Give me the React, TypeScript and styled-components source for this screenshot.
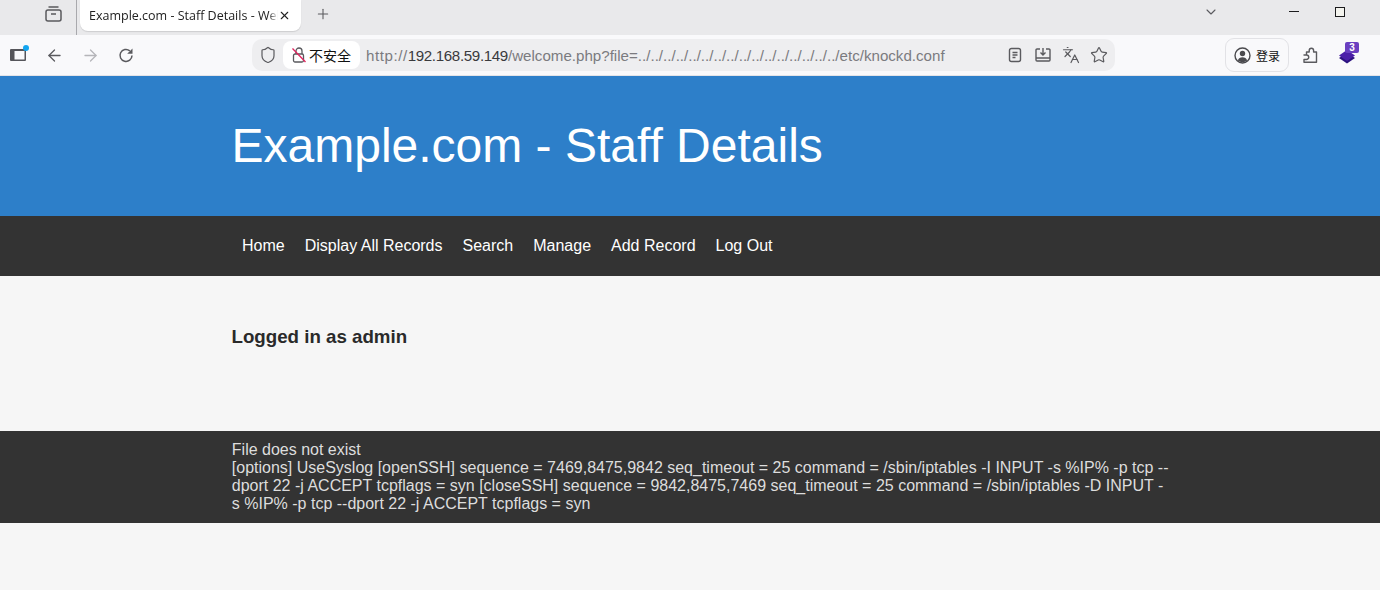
import styled, { createGlobalStyle } from "styled-components";
import { ArrowLeft, ArrowRight, Shield, Star, ChevronDown, Plus, X, Languages } from "lucide-react";

const Global = createGlobalStyle`
  html, body { margin: 0; padding: 0; background: #f6f6f6; overflow: hidden; }
  body { font-family: "Liberation Sans", Arial, sans-serif; }
`;

const Page = styled.div`
  width: 1380px;
  height: 590px;
  overflow: hidden;
  background: #f6f6f6;
`;

const TabStrip = styled.div`
  height: 35px;
  background: #e9e9eb;
  display: flex;
  align-items: flex-start;
  color: #5a5a5e;
`;

const TabGroup = styled.div`
  width: 77px;
  height: 35px;
  border-right: 1px solid #a9a9ad;
  box-sizing: border-box;
  display: flex;
  align-items: center;
  justify-content: flex-start;
  padding-left: 45px;
  padding-bottom: 8px;
`;

const Tab = styled.div`
  width: 221px;
  height: 31px;
  margin-left: 3px;
  background: #fff;
  border-radius: 0 0 8px 8px;
  display: flex;
  align-items: center;
  padding: 0 10px 0 9px;
  box-sizing: border-box;
  font: 12.5px "Open Sans", sans-serif;
  color: #222;
  box-shadow: 0 1px 1px rgba(0, 0, 0, 0.12);
`;

const TabTitle = styled.span`
  flex: 1;
  overflow: hidden;
  white-space: nowrap;
  -webkit-mask-image: linear-gradient(to right, #000 95%, transparent);
  mask-image: linear-gradient(to right, #000 95%, transparent);
`;

const NewTab = styled.div`
  margin-left: 14px;
  margin-top: 6px;
  display: flex;
`;

const Spring = styled.div`
  flex: 1;
`;

const WindowButtons = styled.div`
  display: flex;
  align-items: center;
  height: 24px;
  width: 177px;
`;

const MinimizeBar = styled.div`
  width: 10px;
  height: 1px;
  background: #1c1c1e;
  margin-left: 70px;
  margin-bottom: 2px;
`;

const Square = styled.div`
  width: 8px;
  height: 8px;
  border: 1px solid #1c1c1e;
  background: #f4f4ee;
  margin-left: 36px;
`;

const Toolbar = styled.div`
  height: 40px;
  background: #f9f9fb;
  display: flex;
  align-items: center;
  color: #5a5a5e;
  border-bottom: 1px solid #e4e4e8;
  box-sizing: content-box;
`;

const NavIcons = styled.div`
  display: flex;
  align-items: center;
  width: 252px;
  flex: none;
  padding-left: 10px;
  box-sizing: border-box;
  gap: 17px;
`;

const SideIcon = styled.div`
  position: relative;
  width: 16px;
  height: 18px;
  display: flex;
  align-items: center;
`;

const Dot = styled.span`
  position: absolute;
  top: -1px;
  right: -3px;
  width: 6px;
  height: 6px;
  border-radius: 50%;
  background: #12a5f0;
`;

const BackIcon = styled(ArrowLeft)`
  margin-left: 1.5px;
`;

const ReloadIcon = styled.svg`
  margin-left: 1.5px;
`;

const Omnibox = styled.div`
  width: 863px;
  height: 32px;
  background: #eeeef0;
  border-radius: 10px;
  display: flex;
  align-items: center;
  padding: 0 2px 0 7px;
  box-sizing: border-box;
  flex: none;
`;

const Insecure = styled.div`
  margin-left: 6px;
  height: 28px;
  width: 77px;
  background: #fff;
  border-radius: 8px;
  display: flex;
  align-items: center;
  gap: 3px;
  padding-left: 9px;
  box-sizing: border-box;
  font: 14px "Noto Sans CJK SC", sans-serif;
  color: #111;
`;

const Url = styled.div`
  flex: 1;
  margin-left: 6px;
  font: 15.13px "Liberation Sans", sans-serif;
  color: #7b7b7f;
  white-space: nowrap;
  overflow: hidden;
`;

const Scheme = styled.span`
  letter-spacing: 0.55px;
`;

const Host = styled.span`
  color: #3a3a3d;
  letter-spacing: -0.35px;
`;

const UrlIcons = styled.div`
  display: grid;
  grid-template-columns: repeat(4, 28px);
  justify-items: center;
  align-items: center;
`;

const Login = styled.div`
  margin-left: 110px;
  width: 64px;
  height: 34px;
  border: 1px solid #e2e2e6;
  border-radius: 9px;
  display: flex;
  align-items: center;
  gap: 5px;
  padding-left: 8px;
  box-sizing: border-box;
  font: 12px "Noto Sans CJK SC", sans-serif;
  color: #111;
  flex: none;
`;

const ExtIcons = styled.div`
  display: flex;
  align-items: center;
  margin-left: 14px;
  gap: 21px;
`;

const Badge = styled.span`
  position: absolute;
  top: -4px;
  right: -4px;
  width: 14px;
  height: 11px;
  background: #6a3fc0;
  border-radius: 2px;
  color: #fff;
  font: bold 10px/11px "Liberation Sans", sans-serif;
  text-align: center;
`;

const Gem = styled.div`
  position: relative;
  width: 16px;
  height: 18px;
  display: flex;
  align-items: flex-end;
`;

const Banner = styled.header`
  height: 140px;
  background: #2d7fc9;
  display: flex;
  align-items: center;
  padding: 0 0 2px 231.5px;
  box-sizing: border-box;
`;

const Title = styled.h1`
  margin: 0;
  font: 400 48px "Liberation Sans", Arial, sans-serif;
  color: #fff;
`;

const Nav = styled.nav`
  height: 60px;
  background: #333;
  display: flex;
  align-items: center;
  padding-left: 232px;
`;

const NavLink = styled.a`
  padding: 0 10px;
  font-size: 16px;
  color: #fff;
  text-decoration: none;
`;

const Main = styled.main`
  height: 155px;
  box-sizing: border-box;
  padding: 50px 0 0 231.5px;
`;

const Logged = styled.h3`
  margin: 0;
  font: bold 18.72px "Liberation Sans", Arial, sans-serif;
  color: #2a2a2a;
`;

const Output = styled.footer`
  background: #333;
  color: #ddd;
  font-size: 16px;
  line-height: 18px;
  height: 92px;
  box-sizing: border-box;
  padding: 10px 210px 0 231.8px;
`;

const iconStroke = { strokeWidth: 1.6 };

export default function App() {
  return (
    <Page>
      <Global />
      <TabStrip>
        <TabGroup>
          <svg width="17" height="17" viewBox="0 0 17 17" fill="none" stroke="#5a5a5e" strokeWidth="1.5">
            <rect x="1" y="5" width="15" height="11" rx="2" />
            <path d="M3.5 2h10M6 9h5" />
          </svg>
        </TabGroup>
        <Tab>
          <TabTitle>Example.com - Staff Details - Welcome</TabTitle>
          <X size={13} color="#222" strokeWidth={2} />
        </Tab>
        <NewTab>
          <Plus size={16} {...iconStroke} />
        </NewTab>
        <Spring />
        <WindowButtons>
          <ChevronDown size={16} {...iconStroke} />
          <MinimizeBar />
          <Square />
        </WindowButtons>
      </TabStrip>
      <Toolbar>
        <NavIcons>
          <SideIcon>
            <svg width="16" height="12" viewBox="0 0 16 12">
              <path d="M1 0h14a1 1 0 0 1 1 1v10a1 1 0 0 1-1 1H1a1 1 0 0 1-1-1V1a1 1 0 0 1 1-1Zm3.500 2v8.500h10V2Z" fill="#55555a" fillRule="evenodd" />
            </svg>
            <Dot />
          </SideIcon>
          <BackIcon size={19} {...iconStroke} />
          <ArrowRight size={19} color="#b5b5b9" {...iconStroke} />
          <ReloadIcon width="16" height="16" viewBox="0 0 16 16" fill="none">
            <path d="M14 8.500a6 6 0 1 1-2.200-4.700" stroke="#5a5a5e" strokeWidth="1.5" />
            <path d="M14.500 1.500v5.300H9.200Z" fill="#5a5a5e" />
          </ReloadIcon>
        </NavIcons>
        <Omnibox>
          <Shield size={18} {...iconStroke} />
          <Insecure>
            <svg width="14" height="16" viewBox="0 0 14 16" fill="none" stroke="#5a5a5e" strokeWidth="1.3">
              <rect x="1.5" y="7" width="10" height="8" rx="1.5" />
              <path d="M4 7V4a3 3 0 0 1 6 0v3" />
              <path d="M0.5 1.500 13.5 15" stroke="#e0245e" />
            </svg>
            不安全
          </Insecure>
          <Url>
            <Scheme>http://</Scheme>
            <Host>192.168.59.149</Host>/welcome.php?file=../../../../../../../../../../../../../../../../etc/knockd.conf
          </Url>
          <UrlIcons>
            <svg width="16" height="16" viewBox="0 0 16 16" fill="none" stroke="#5a5a5e" strokeWidth="1.4">
              <rect x="2.5" y="1.500" width="11" height="13" rx="2" />
              <path d="M5.500 5.500h5M5.500 8h5M5.500 10.500h3" />
            </svg>
            <svg width="16" height="16" viewBox="0 0 16 16" fill="none" stroke="#5a5a5e" strokeWidth="1.4">
              <path d="M5 2H2a1 1 0 0 0-1 1v10a1 1 0 0 0 1 1h12a1 1 0 0 0 1-1V3a1 1 0 0 0-1-1h-3" />
              <path d="M8 1v7M5.500 5.500 8 8l2.500-2.500M1 11h14" />
            </svg>
            <Languages size={18} {...iconStroke} />
            <Star size={18} {...iconStroke} />
          </UrlIcons>
        </Omnibox>
        <Login>
          <svg width="17" height="17" viewBox="0 0 17 17" fill="none">
            <circle cx="8.500" cy="8.500" r="7.500" stroke="#4a4a4e" strokeWidth="1.4" />
            <circle cx="8.500" cy="6.500" r="2.700" fill="#4a4a4e" />
            <path d="M3.800 13.500c.8-2.300 2.500-3.200 4.700-3.200s3.900.9 4.700 3.200a7 7 0 0 1-9.400 0Z" fill="#4a4a4e" />
          </svg>
          登录
        </Login>
        <ExtIcons>
          <svg width="15" height="16" viewBox="0 0 15 16" fill="none" stroke="#5a5a5e" strokeWidth="1.4" strokeLinejoin="round">
            <path d="M1 8h2.500V5h2.700V3.500a2.200 2.200 0 0 1 4.400 0V5h2.900v10.300H1v-2.800h2.500a2.200 2.200 0 0 0 0-4.500H1Z" />
          </svg>
          <Gem>
            <svg width="16" height="14" viewBox="0 0 16 14">
              <path d="M0 8 8 13.500 16 8 13 6 8 9.500 3 6Z" fill="#2d1380" />
              <path d="M8 0 16 5.500 8 11 0 5.500Z" fill="#4b1fa8" />
            </svg>
            <Badge>3</Badge>
          </Gem>
        </ExtIcons>
      </Toolbar>
      <Banner>
        <Title>Example.com - Staff Details</Title>
      </Banner>
      <Nav>
        {["Home", "Display All Records", "Search", "Manage", "Add Record", "Log Out"].map((label) => (
          <NavLink key={label} href="#">
            {label}
          </NavLink>
        ))}
      </Nav>
      <Main>
        <Logged>Logged in as admin</Logged>
      </Main>
      <Output>
        File does not exist
        <br />
        [options] UseSyslog [openSSH] sequence = 7469,8475,9842 seq_timeout = 25 command = /sbin/iptables -I INPUT -s %IP% -p tcp --dport 22 -j ACCEPT tcpflags = syn [closeSSH] sequence = 9842,8475,7469 seq_timeout = 25 command = /sbin/iptables -D INPUT -s %IP% -p tcp --dport 22 -j ACCEPT tcpflags = syn
      </Output>
    </Page>
  );
}
